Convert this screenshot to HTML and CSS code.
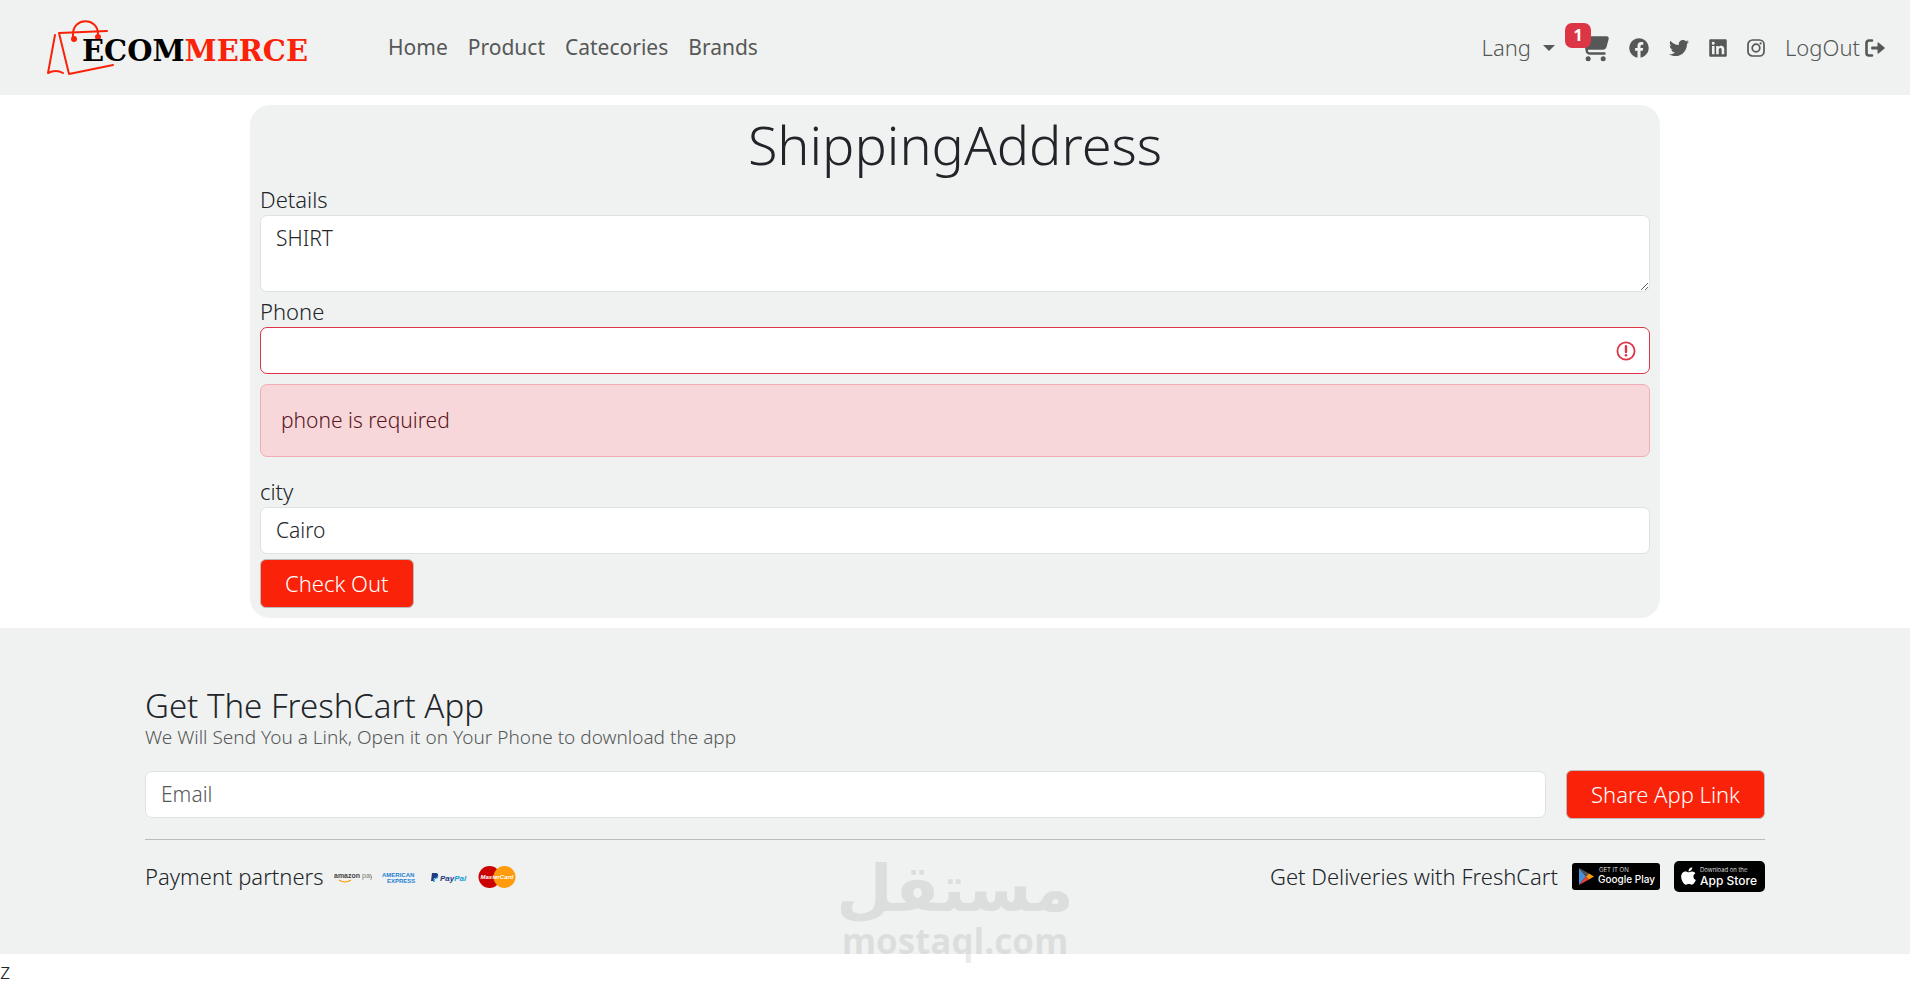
FILE: index.html
```html
<!DOCTYPE html>
<html lang="en">
<head>
    <meta charset="UTF-8">
    <meta name="viewport" content="width=device-width, initial-scale=1.0">
    <title>Shipping Address</title>
    <link rel="stylesheet" href="styles.css">
</head>
<body>
    <nav class="navbar">
        <a class="brand" href="#" aria-label="Ecommerce">
            <svg width="270" height="60" viewBox="0 -7 270 60">
                <g fill="none" stroke="#fa2209" stroke-width="2" stroke-linejoin="round" stroke-linecap="round">
                    <path d="M8 10 L1 48 Q9 44 16 48"/>
                    <path d="M60 6 L12 8 L22 49 L66 40"/>
                    <path d="M26 13 V9 C26 -8 51 -8 51 9 V12"/>
                </g>
                <circle cx="27" cy="14" r="3" fill="#fa2209"/>
                <circle cx="51" cy="12" r="3" fill="#fa2209"/>
                <text class="brand-text" x="35" y="36">ECOM<tspan fill="#fa2209">MERCE</tspan></text>
            </svg>
        </a>
        <ul class="nav-links">
            <li><a href="#">Home</a></li>
            <li><a href="#">Product</a></li>
            <li><a href="#">Catecories</a></li>
            <li><a href="#">Brands</a></li>
        </ul>
        <ul class="nav-tools">
            <li><button type="button" class="lang">Lang <span class="caret"></span></button></li>
            <li>
                <a class="cart" href="#" aria-label="Cart">
                    <svg width="30" height="30" viewBox="0 0 576 512"><path d="M0 24C0 10.7 10.7 0 24 0H69.5c22 0 41.5 12.8 50.6 32h411c26.3 0 45.5 25 38.6 50.4l-41 152.3c-8.5 31.4-37 53.3-69.5 53.3H170.7l5.4 28.5c2.2 11.3 12.1 19.5 23.6 19.5H488c13.3 0 24 10.7 24 24s-10.7 24-24 24H199.7c-34.6 0-64.3-24.6-70.7-58.5L77.4 54.5c-.7-3.8-4-6.5-7.9-6.5H24C10.7 48 0 37.3 0 24zM128 464a48 48 0 1 1 96 0 48 48 0 1 1 -96 0zm336-48a48 48 0 1 1 0 96 48 48 0 1 1 0-96z"/></svg>
                    <span class="badge">1</span>
                </a>
            </li>
            <li><a href="#" aria-label="Facebook"><svg width="20" height="20" viewBox="0 0 512 512"><path d="M504 256C504 119 393 8 256 8S8 119 8 256c0 123.78 90.69 226.38 209.25 245V327.69h-63V256h63v-54.64c0-62.15 37-96.48 93.67-96.48 27.14 0 55.52 4.84 55.52 4.84v61h-31.28c-30.8 0-40.41 19.12-40.41 38.73V256h68.78l-11 71.69h-57.78V501C413.31 482.38 504 379.78 504 256z"/></svg></a></li>
            <li><a href="#" aria-label="Twitter"><svg width="20" height="20" viewBox="0 0 512 512"><path d="M459.37 151.716c.325 4.548.325 9.097.325 13.645 0 138.72-105.583 298.558-298.558 298.558-59.452 0-114.68-17.219-161.137-47.106 8.447.974 16.568 1.299 25.34 1.299 49.055 0 94.213-16.568 130.274-44.832-46.132-.975-84.792-31.188-98.112-72.772 6.498.974 12.995 1.624 19.818 1.624 9.421 0 18.843-1.3 27.614-3.573-48.081-9.747-84.143-51.98-84.143-102.985v-1.299c13.969 7.797 30.214 12.67 47.431 13.319-28.264-18.843-46.781-51.005-46.781-87.391 0-19.492 5.197-37.36 14.294-52.954 51.655 63.675 129.3 105.258 216.365 109.807-1.624-7.797-2.599-15.918-2.599-24.04 0-57.828 46.782-104.934 104.934-104.934 30.213 0 57.502 12.67 76.67 33.137 23.715-4.548 46.456-13.32 66.599-25.34-7.798 24.366-24.366 44.833-46.132 57.827 21.117-2.273 41.584-8.122 60.426-16.243-14.292 20.791-32.161 39.308-52.628 54.253z"/></svg></a></li>
            <li><a href="#" aria-label="LinkedIn"><svg width="18" height="20" viewBox="0 0 448 512"><path d="M416 32H31.9C14.3 32 0 46.5 0 64.3v383.4C0 465.5 14.3 480 31.9 480H416c17.6 0 32-14.5 32-32.3V64.3c0-17.8-14.4-32.3-32-32.3zM135.4 416H69V202.2h66.5V416zm-33.2-243c-21.3 0-38.5-17.3-38.5-38.5S80.9 96 102.2 96c21.2 0 38.5 17.3 38.5 38.5 0 21.3-17.2 38.5-38.5 38.5zm282.1 243h-66.4V312c0-24.8-.5-56.7-34.5-56.7-34.6 0-39.9 27-39.9 54.9V416h-66.4V202.2h63.7v29.2h.9c8.9-16.8 30.6-34.5 62.9-34.5 67.2 0 79.7 44.3 79.7 101.9V416z"/></svg></a></li>
            <li><a href="#" aria-label="Instagram"><svg width="18" height="20" viewBox="0 0 18 20"><g fill="none" stroke="#565857" stroke-width="1.7"><rect x="1" y="2" width="16" height="16" rx="4.5"/><circle cx="9" cy="10" r="3.8"/></g><circle cx="13.6" cy="5.4" r="1.1"/></svg></a></li>
            <li>
                <a class="logout" href="#">LogOut
                    <svg width="20" height="20" viewBox="0 0 20 20"><path d="M7 2.5H4A2.5 2.5 0 0 0 1.5 5v10A2.5 2.5 0 0 0 4 17.5H7" fill="none" stroke="#565857" stroke-width="2.6" stroke-linecap="round"/><path d="M7 8.6H12.5V4.8Q12.7 4 13.5 4.5L19.6 9.4Q20 10 19.6 10.6L13.5 15.5Q12.7 16 12.5 15.2V11.4H7Q6 11.2 6 10Q6 8.8 7 8.6Z"/></svg>
                </a>
            </li>
        </ul>
    </nav>

    <main class="panel">
        <h1>ShippingAddress</h1>
        <form>
            <div class="form-group">
                <label for="details">Details</label>
                <textarea id="details" class="form-control" name="details">SHIRT</textarea>
            </div>
            <div class="form-group">
                <label for="phone">Phone</label>
                <div class="invalid">
                    <input type="tel" id="phone" class="form-control" name="phone">
                    <svg class="invalid-icon" width="20" height="20" viewBox="0 0 20 20"><circle cx="10" cy="10" r="8.6" fill="none" stroke="#dc3545" stroke-width="1.8"/><path d="M10 5.2V11" stroke="#dc3545" stroke-width="2.4" stroke-linecap="round"/><circle cx="10" cy="14.3" r="1.3" fill="#dc3545"/></svg>
                </div>
                <div class="alert" role="alert">phone is required</div>
            </div>
            <div class="form-group">
                <label for="city">city</label>
                <input type="text" id="city" class="form-control" name="city" value="Cairo">
            </div>
            <button type="submit" class="btn">Check Out</button>
        </form>
    </main>

    <footer class="footer">
        <div class="footer-inner">
            <h2>Get The FreshCart App</h2>
            <p class="lead">We Will Send You a Link, Open it on Your Phone to download the app</p>
            <form class="share-form">
                <input type="email" class="form-control" placeholder="Email" aria-label="Email">
                <button type="submit" class="btn">Share App Link</button>
            </form>
            <div class="footer-row">
                <div class="partners">
                    <span>Payment partners</span>
                    <svg width="38" height="24" viewBox="0 0 38 24">
                        <text class="pay-text" x="0" y="13">amazon<tspan class="pay-light"> pay</tspan></text>
                        <path d="M5 15 Q11 19 17 15" fill="none" stroke="#f90" stroke-width="1.2"/>
                    </svg>
                    <svg width="38" height="24" viewBox="0 0 38 24">
                        <text class="amex-text" x="0" y="12">AMERICAN</text>
                        <text class="amex-text" x="5" y="18">EXPRESS</text>
                    </svg>
                    <svg width="38" height="24" viewBox="0 0 38 24">
                        <path d="M2 8H6C9 8 9 13 5.5 13H4L3.500 16H1Z" fill="#253b80"/>
                        <path d="M8 10C9 13 7 14 5 14L4.5 17H3L3.500 14L6 13Z" fill="#179bd7"/>
                        <text class="paypal-text" x="10" y="16">Pay<tspan fill="#179bd7">Pal</tspan></text>
                    </svg>
                    <svg width="38" height="24" viewBox="0 0 38 24">
                        <circle cx="11.5" cy="12" r="11" fill="#c00"/>
                        <circle cx="26.5" cy="12" r="11" fill="#ff9b0c"/>
                        <text class="mc-text" x="19" y="14">MasterCard</text>
                    </svg>
                </div>
                <div class="stores">
                    <span>Get Deliveries with FreshCart</span>
                    <a href="#" aria-label="Google Play">
                        <svg width="88" height="27" viewBox="0 0 88 27">
                            <rect width="88" height="27" rx="3"/>
                            <path d="M7 5L14 13.5L7 22Z" fill="#4a90d9"/>
                            <path d="M7 5L17 10.5L14 13.5Z" fill="#555"/>
                            <path d="M7 22L17 16.5L14 13.5Z" fill="#ea4335"/>
                            <path d="M17 10.5L22 13.5L17 16.5L14 13.5Z" fill="#fb9b0c"/>
                            <text class="store-small" x="27" y="9">GET IT ON</text>
                            <text class="store-name" x="26" y="20">Google Play</text>
                        </svg>
                    </a>
                    <a href="#" aria-label="App Store">
                        <svg width="91" height="31" viewBox="0 0 91 31">
                            <rect width="91" height="31" rx="5"/>
                            <svg x="7" y="5" width="15" height="20" viewBox="0 0 384 512"><path fill="#fff" d="M318.7 268.7c-.2-36.7 16.4-64.4 50-84.8-18.8-26.9-47.2-41.7-84.7-44.6-35.5-2.8-74.3 20.7-88.5 20.7-15 0-49.4-19.7-76.4-19.7C63.3 141.2 4 184.8 4 273.5q0 39.3 14.4 81.2c12.8 36.7 59 126.7 107.2 125.2 25.2-.6 43-17.9 75.8-17.9 31.8 0 48.3 17.9 76.4 17.9 48.6-.7 90.4-82.5 102.6-119.3-65.2-30.7-61.7-90-61.7-91.9zm-56.6-164.2c27.3-32.4 24.8-61.9 24-72.5-24.1 1.4-52 16.4-67.9 34.9-17.5 19.8-27.8 44.3-25.6 71.9 26.1 2 49.9-11.4 69.5-34.2z"/></svg>
                            <text class="store-small" x="26" y="11">Download on the</text>
                            <text class="store-name app" x="26" y="24">App Store</text>
                        </svg>
                    </a>
                </div>
            </div>
        </div>
        <div class="watermark">
            <span class="watermark-ar" lang="ar" dir="rtl">مستقل</span>
            <span class="watermark-en">mostaql.com</span>
        </div>
    </footer>
    <p class="tail">z</p>
</body>
</html>
```
FILE: styles.css
```css
* {
    margin: 0;
    padding: 0;
    box-sizing: border-box;
}

body {
    font-family: "Noto Sans", "Open Sans", sans-serif;
    font-size: 22px;
    font-weight: 300;
    line-height: 33px;
    color: #212529;
    background: #fff;
    overflow-x: hidden;
}

a {
    color: #565857;
    text-decoration: none;
}

ul {
    list-style: none;
}

svg {
    display: block;
    flex-shrink: 0;
}

.navbar {
    display: flex;
    align-items: center;
    min-height: 95px;
    padding: 0 25px 0 47px;
    background: #f0f2f1;
}

.navbar svg {
    fill: #565857;
    overflow: visible;
}

.navbar .brand-text {
    font-family: "DejaVu Serif", serif;
    font-size: 29px;
    font-weight: 700;
    fill: #000;
}

.nav-links,
.nav-tools {
    display: flex;
    align-items: center;
    gap: 20px;
}

.nav-links {
    margin-left: 71px;
    font-size: 21px;
    font-weight: 400;
}

.nav-tools {
    margin-left: auto;
}

.lang {
    display: flex;
    align-items: center;
    gap: 12px;
    border: none;
    background: none;
    font: inherit;
    color: #565857;
    cursor: pointer;
}

.caret {
    border: 6px solid transparent;
    border-top-color: #565857;
    border-bottom: none;
}

.cart {
    display: block;
    position: relative;
    margin-left: 4px;
}

.badge {
    position: absolute;
    top: -10px;
    left: -14px;
    width: 26px;
    height: 25px;
    border-radius: 7px;
    background: #dc3545;
    color: #fff;
    font-size: 16px;
    font-weight: 700;
    line-height: 25px;
    text-align: center;
}

.logout {
    display: flex;
    align-items: center;
    gap: 5px;
}

.panel {
    max-width: 1410px;
    margin: 10px auto;
    padding: 10px;
    border-radius: 20px;
    background: #f0f2f1;
}

h1 {
    margin-bottom: 7px;
    font-size: 54px;
    font-weight: 300;
    line-height: 58px;
    text-align: center;
}

.form-group {
    padding-top: 4px;
}

label {
    display: block;
    line-height: 31px;
}

.form-control {
    display: block;
    width: 100%;
    padding: 6px 15px;
    border: 1px solid #dee2e6;
    border-radius: 7px;
    background: #fff;
    font: inherit;
    font-size: 21px;
    color: #212529;
}

.form-control::placeholder {
    color: #565857;
    opacity: 1;
}

textarea.form-control {
    height: 77px;
    resize: vertical;
}

.invalid {
    position: relative;
}

.invalid .form-control {
    border-color: #dc3545;
}

.invalid-icon {
    position: absolute;
    top: 14px;
    right: 14px;
}

.alert {
    margin: 10px 0 15px;
    padding: 19px 20px;
    border: 1px solid #f1aeb5;
    border-radius: 7px;
    background: #f8d7da;
    font-size: 21px;
    color: #58151c;
}

.btn {
    padding: 7px 24px;
    border: 1px solid #bbb;
    border-radius: 6px;
    background: #fa2209;
    color: #fff;
    font: inherit;
    white-space: nowrap;
    cursor: pointer;
}

.panel .btn {
    margin-top: 5px;
}

.footer {
    position: relative;
    padding: 59px 20px 61px;
    background: #f0f2f1;
}

.footer-inner {
    max-width: 1620px;
    margin: 0 auto;
}

h2 {
    font-size: 33px;
    font-weight: 300;
    line-height: 38px;
}

.lead {
    padding-bottom: 1px;
    font-size: 19px;
    line-height: 24px;
    color: #565857;
}

.share-form {
    display: flex;
    align-items: center;
    gap: 20px;
    padding: 20px 0;
    border-bottom: 1px solid #bbb;
}

.footer-row {
    display: flex;
    align-items: center;
    justify-content: space-between;
    padding-top: 20px;
}

.partners,
.stores {
    display: flex;
    align-items: center;
    gap: 10px;
}

.stores {
    gap: 14px;
}

.pay-text,
.amex-text,
.paypal-text,
.mc-text {
    font-family: "Liberation Sans", sans-serif;
    font-weight: 700;
}

.pay-text {
    font-size: 7px;
    fill: #444;
}

.pay-light {
    font-weight: 400;
    fill: #777;
}

.amex-text {
    font-size: 6px;
    fill: #1f7fd6;
}

.paypal-text {
    font-size: 8px;
    font-style: italic;
    fill: #253b80;
}

.mc-text {
    font-size: 6px;
    font-style: italic;
    text-anchor: middle;
    fill: #fff;
}

.store-small,
.store-name {
    font-family: Inter, sans-serif;
    font-size: 6px;
    fill: #fff;
}

.store-name {
    font-size: 10px;
    font-weight: 500;
}

.store-name.app {
    font-size: 12px;
}

.watermark {
    position: absolute;
    left: 0;
    right: 0;
    bottom: -9px;
    display: flex;
    flex-direction: column;
    align-items: center;
    font-weight: 700;
    opacity: 0.08;
    color: #000;
    pointer-events: none;
}

.watermark-ar {
    font-family: "DejaVu Sans", sans-serif;
    font-size: 65px;
    line-height: 60px;
}

.watermark-en {
    font-family: "Open Sans", sans-serif;
    font-size: 35px;
    line-height: 44px;
}
```
